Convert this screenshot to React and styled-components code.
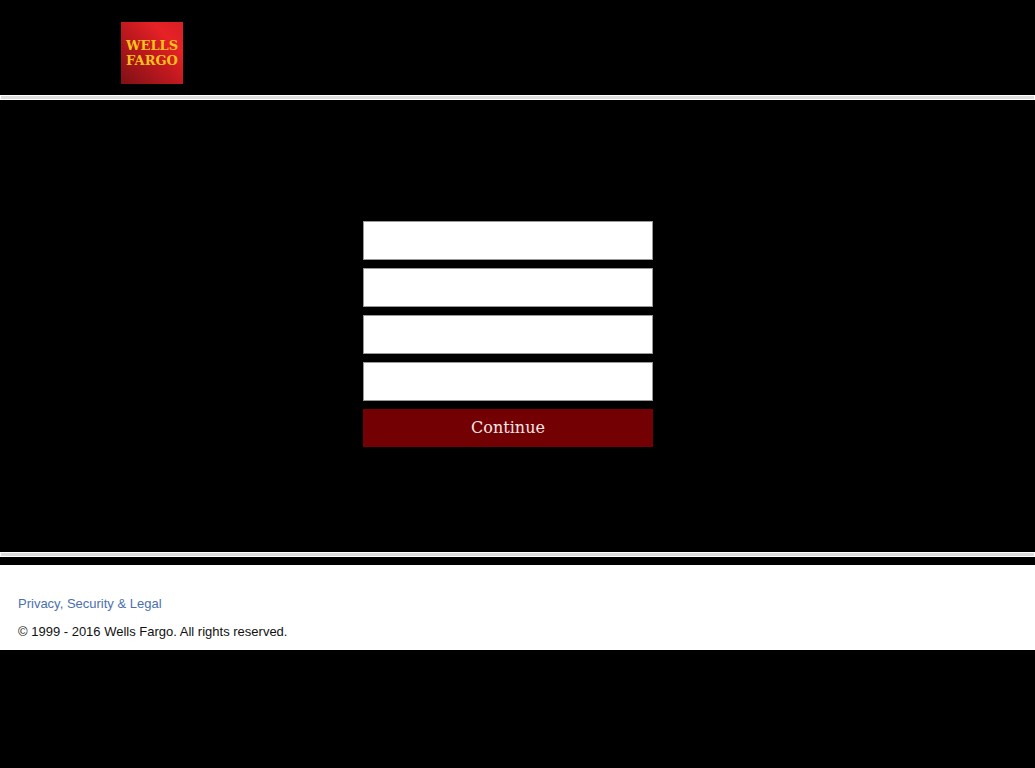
import React from "react";
import styled, { createGlobalStyle } from "styled-components";

const GlobalStyle = createGlobalStyle`
  *, *::before, *::after { box-sizing: border-box; }
  body {
    margin: 0;
    background: #000;
    color: #111;
    font-family: "Liberation Sans", Arial, sans-serif;
    font-size: 13px;
  }
`;

const Header = styled.header`
  padding: 22px 24px 11px 121px;
`;

const Logo = styled.svg`
  display: block;
  width: 62px;
  height: 62px;
`;

const Rule = styled.hr`
  height: 5px;
  margin: 0;
  border: 1px solid #fff;
  background: #dedede;
`;

const Main = styled.main`
  display: flex;
  justify-content: center;
  padding: 121px 19px 105px 0;
`;

const Form = styled.form`
  display: flex;
  flex-direction: column;
  gap: 8px;
  width: 290px;
`;

const Field = styled.input`
  width: 100%;
  height: 39px;
  padding: 0 10px;
  border: 1px solid #999;
  border-radius: 0;
  background: #fff;
  font: inherit;
`;

const Button = styled.button`
  width: 100%;
  height: 38px;
  padding: 0;
  border: 0;
  background: #730002;
  color: #f6e6e6;
  font-family: "DejaVu Serif", serif;
  font-size: 16px;
  font-weight: 300;
  line-height: 38px;
`;

const Footer = styled.footer`
  margin-top: 8px;
  padding: 25px 18px 4px;
  background: #fff;
  line-height: 28px;
`;

const FooterLine = styled.p`
  margin: 0;
`;

const FooterLink = styled.a`
  color: #4a70b0;
  text-decoration: none;
`;

const fields = ["Field 1", "Field 2", "Field 3", "Field 4"];

export default function App() {
  return (
    <>
      <GlobalStyle />
      <Header>
        <Logo viewBox="0 0 62 62" role="img" aria-label="Wells Fargo">
          <defs>
            <linearGradient id="logoRed" x1="0" y1="1" x2="1" y2="0">
              <stop offset="0" stopColor="#7d1016" />
              <stop offset="0.5" stopColor="#c3191f" />
              <stop offset="0.75" stopColor="#e62226" />
              <stop offset="1" stopColor="#d81f26" />
            </linearGradient>
          </defs>
          <rect width="62" height="62" fill="url(#logoRed)" />
          <g
            fill="#fbc21a"
            fontFamily="DejaVu Serif, serif"
            fontSize="13"
            fontWeight="700"
            textAnchor="middle"
          >
            <text x="31" y="28">WELLS</text>
            <text x="31" y="43">FARGO</text>
          </g>
        </Logo>
      </Header>
      <Rule />
      <Main>
        <Form onSubmit={(e) => e.preventDefault()}>
          {fields.map((name) => (
            <Field key={name} type="text" aria-label={name} autoComplete="off" />
          ))}
          <Button type="button">Continue</Button>
        </Form>
      </Main>
      <Rule />
      <Footer>
        <FooterLine>
          <FooterLink href="#">Privacy, Security &amp; Legal</FooterLink>
        </FooterLine>
        <FooterLine>© 1999 - 2016 Wells Fargo. All rights reserved.</FooterLine>
      </Footer>
    </>
  );
}
